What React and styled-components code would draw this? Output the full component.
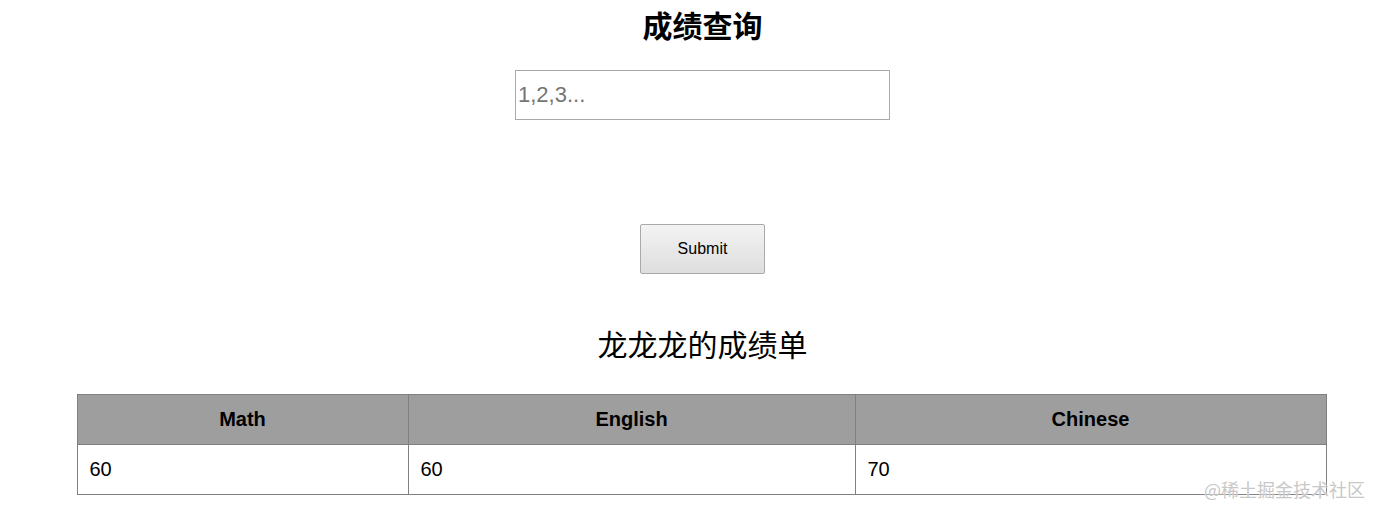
import React, { useState } from "react";
import styled, { createGlobalStyle } from "styled-components";

const GlobalStyle = createGlobalStyle`
  body {
    margin: 0;
    background: #fff;
    font-family: Arial, "Liberation Sans", "Noto Sans CJK SC", sans-serif;
    color: #000;
  }
`;

const Page = styled.div`
  padding-left: 32px;
  display: flex;
  flex-direction: column;
  align-items: center;
  position: relative;
  height: 508px;
  box-sizing: border-box;
  overflow: hidden;
`;

const Title = styled.h1`
  margin: 10px 0 0;
  font-size: 30px;
  font-weight: bold;
  line-height: 34px;
`;

const QueryInput = styled.input`
  margin-top: 26px;
  width: 375px;
  height: 50px;
  box-sizing: border-box;
  border: 1px solid #a9a9a9;
  padding: 0 2px;
  font-size: 22px;
  font-family: Arial, "Liberation Sans", sans-serif;
  outline: none;
  &::placeholder {
    color: #757575;
  }
`;

const SubmitButton = styled.button`
  margin-top: 104px;
  width: 125px;
  height: 50px;
  border: 1px solid #a9a9a9;
  border-radius: 2px;
  background: linear-gradient(#f3f3f3, #dedede);
  font-size: 16px;
  font-family: Arial, "Liberation Sans", sans-serif;
  color: #000;
`;

const SubTitle = styled.h2`
  margin: 52px 0 0;
  font-size: 30px;
  font-weight: normal;
  line-height: 40px;
`;

const Table = styled.table`
  margin: 28px 2px 0 0;
  width: 1246px;
  border-collapse: collapse;
  table-layout: fixed;
  font-size: 20px;
`;

const HeadCell = styled.th`
  width: ${p => p.w}px;
  height: 49px;
  padding: 0;
  background: #9e9e9e;
  border: 1px solid #808080;
  font-weight: bold;
  text-align: center;
`;

const Cell = styled.td`
  height: 49px;
  padding: 0 0 0 12px;
  border: 1px solid #808080;
  text-align: left;
`;

const Watermark = styled.div`
  position: absolute;
  right: 8px;
  bottom: 6px;
  font-size: 18px;
  color: #c8c8c8;
  font-family: "Noto Sans CJK SC", sans-serif;
  text-shadow: 0 0 2px #fff;
`;

const subjects = [
  { name: "Math", width: 330, score: 60 },
  { name: "English", width: 446, score: 60 },
  { name: "Chinese", width: 470, score: 70 },
];

export default function App() {
  const [query, setQuery] = useState("");

  return (
    <Page>
      <GlobalStyle />
      <Title>成绩查询</Title>
      <QueryInput
        type="text"
        value={query}
        placeholder="1,2,3..."
        onChange={e => setQuery(e.target.value)}
      />
      <SubmitButton>Submit</SubmitButton>
      <SubTitle>龙龙龙的成绩单</SubTitle>
      <Table>
        <thead>
          <tr>
            {subjects.map(s => (
              <HeadCell key={s.name} w={s.width}>{s.name}</HeadCell>
            ))}
          </tr>
        </thead>
        <tbody>
          <tr>
            {subjects.map(s => (
              <Cell key={s.name}>{s.score}</Cell>
            ))}
          </tr>
        </tbody>
      </Table>
      <Watermark>@稀土掘金技术社区</Watermark>
    </Page>
  );
}
